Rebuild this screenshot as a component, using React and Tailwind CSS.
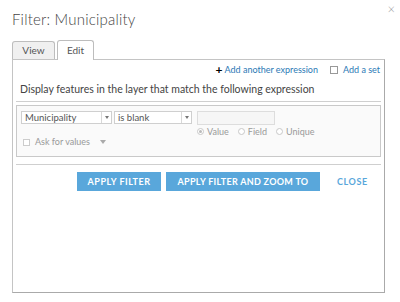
import React from "react";

const Select = ({ value, width }) => (
  <div
    className={`flex h-[13px] items-stretch border border-[#cfcfcf] bg-white ${width}`}
  >
    <span className="flex-1 truncate pl-[3px] text-[9.5px] leading-[11px] text-[#555]">
      {value}
    </span>
    <span className="flex w-[10px] items-center justify-center border-l border-[#d8d8d8]">
      <span className="block h-0 w-0 border-x-[2.5px] border-t-[3px] border-x-transparent border-t-[#777]" />
    </span>
  </div>
);

const Radio = ({ label, checked }) => (
  <label className="flex items-center gap-[3px] text-[9px] text-[#999]">
    <span className="flex h-[7px] w-[7px] items-center justify-center rounded-full border border-[#c8c8c8] bg-white">
      {checked && <span className="block h-[3px] w-[3px] rounded-full bg-[#bbb]" />}
    </span>
    {label}
  </label>
);

export default function App() {
  return (
    <div className="relative h-[302px] w-[400px] overflow-hidden bg-white font-['Lato',sans-serif]">
      <button className="absolute right-[5px] top-[3px] text-[13px] leading-none text-[#999] font-light">
        ×
      </button>

      <h1 className="pl-[12px] pt-[9px] text-[15px] font-light leading-[21px] text-[#444] tracking-[0.2px]">
        Filter: Municipality
      </h1>

      <div className="ml-[12px] mt-[10px] flex h-[19px] items-end">
        <div className="flex h-[18px] w-[43px] items-center justify-center rounded-t-[3px] border border-b-0 border-[#bdbdbd] bg-[#f0f0f0] text-[10px] text-[#555]">
          View
        </div>
        <div className="relative z-10 -mb-px ml-[2px] flex h-[20px] w-[37px] items-center justify-center rounded-t-[3px] border border-b-0 border-[#bdbdbd] bg-white text-[10px] text-[#555]">
          Edit
        </div>
      </div>

      <div className="ml-[12px] h-[234px] w-[373px] border border-[#c4c4c4] border-b-[#aaa] border-r-[#aaa] px-[3px]">
        <div className="flex h-[19px] items-center justify-end gap-[12px] pr-[1px]">
          <span className="flex items-center text-[9px] text-[#2b79b5]">
            <span className="mr-[2px] text-[12px] font-bold leading-none text-black">+</span>
            Add another expression
          </span>
          <span className="flex items-center gap-[5px] text-[9px] text-[#2b79b5]">
            <span className="block h-[8px] w-[8px] border border-[#999] bg-white" />
            Add a set
          </span>
        </div>

        <div className="flex h-[23px] items-center border-b border-[#cfcfcf] pl-[4px] text-[10.5px] text-[#444]">
          Display features in the layer that match the following expression
        </div>

        <div className="mt-[3px] h-[52px] border border-[#c9c9c9] bg-[#fafafa] px-[4px] pt-[5px]">
          <div className="flex items-start">
            <Select value="Municipality" width="w-[91px]" />
            <Select value="is blank" width="ml-[2px] w-[78px]" />
            <div className="ml-[5px] h-[14px] w-[78px] border border-[#ddd] bg-[#f6f6f6]" />
          </div>
          <div className="ml-[176px] mt-[1px] flex h-[11px] items-center gap-[9px]">
            <Radio label="Value" checked />
            <Radio label="Field" />
            <Radio label="Unique" />
          </div>
          <div className="ml-[2px] flex h-[10px] items-center gap-[5px] text-[9px] text-[#999]">
            <span className="block h-[7px] w-[7px] border border-[#ccc] bg-white" />
            Ask for values
            <span className="ml-[5px] block h-0 w-0 border-x-[3px] border-t-[4px] border-x-transparent border-t-[#aaa]" />
          </div>
        </div>

        <div className="mt-[7px] border-t border-[#cfcfcf]" />

        <div className="mt-[7px] flex h-[19px] items-stretch">
          <button className="ml-[61px] w-[84px] bg-[#59a7db] text-[9px] font-bold tracking-[0.5px] text-white">
            APPLY FILTER
          </button>
          <button className="ml-[5px] w-[154px] bg-[#59a7db] text-[9px] font-bold tracking-[0.3px] text-white">
            APPLY FILTER AND ZOOM TO
          </button>
          <button className="ml-[17px] text-[9px] font-bold tracking-[0.6px] text-[#59a7db]">
            CLOSE
          </button>
        </div>
      </div>
    </div>
  );
}
